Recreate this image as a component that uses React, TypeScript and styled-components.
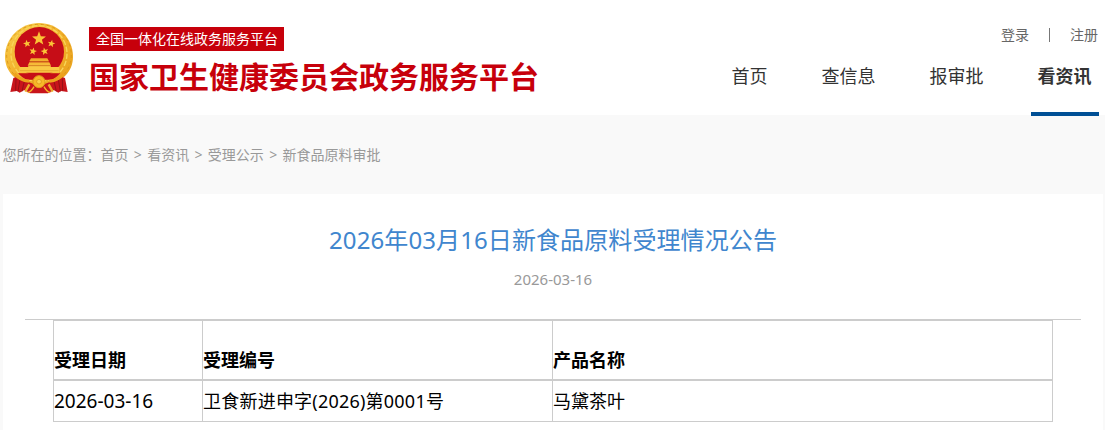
import * as React from "react";
import styled, { createGlobalStyle } from "styled-components";

const GlobalStyle = createGlobalStyle`
  * {
    box-sizing: border-box;
  }

  body {
    margin: 0;
    background: #f9f9f9;
    font-family: "Noto Sans", "Noto Sans CJK SC", sans-serif;
    overflow: hidden;
  }
`;

const navItems = ["首页", "查信息", "报审批", "看资讯"];
const crumbs = ["首页", "看资讯", "受理公示", "新食品原料审批"];
const columns = ["受理日期", "受理编号", "产品名称"];
const records = [["2026-03-16", "卫食新进申字(2026)第0001号", "马黛茶叶"]];

const star = (cx: number, cy: number, r: number, turn = 0) =>
  Array.from({ length: 10 }, (_, i) => {
    const a = ((i * 36 - 90 + turn) * Math.PI) / 180;
    const d = i % 2 ? r * 0.42 : r;
    return `${(cx + d * Math.cos(a)).toFixed(1)},${(cy + d * Math.sin(a)).toFixed(1)}`;
  }).join(" ");

const Emblem = () => (
  <EmblemSvg viewBox="12 35 210 219">
    <defs>
      <linearGradient id="gold" x1="0" y1="0" x2="1" y2="1">
        <stop offset="0" stopColor="#f8cf4e" />
        <stop offset="0.5" stopColor="#f2b02a" />
        <stop offset="1" stopColor="#e8a01c" />
      </linearGradient>
      <linearGradient id="gate" x1="0" y1="0" x2="0" y2="1">
        <stop offset="0" stopColor="#f2a828" />
        <stop offset="1" stopColor="#fbd04a" />
      </linearGradient>
    </defs>
    {/* wheat ring */}
    <path
      d="M117 38C61 38 15 82 15 139c0 22 8 42 24 58l37 33h82l37-33c16-16 24-36 24-58C219 82 173 38 117 38z"
      fill="url(#gold)"
    />
    <ellipse cx="117" cy="134" rx="97" ry="92" fill="none" stroke="#dc981c" strokeWidth="3" strokeDasharray="9 9" />
    <ellipse cx="117" cy="130" rx="84" ry="84" fill="none" stroke="#f9d55a" strokeWidth="4" strokeDasharray="16 6" />
    <circle cx="118" cy="124" r="74" fill="#c60d17" />
    {/* gate */}
    <path d="M93 144h49l5 9H88zM88 156h60l5 10H83zM86 167h65v13H86z" fill="url(#gate)" />
    <path d="M58 170h27v-4h67v4h26v17H58z" fill="#fac845" />
    <path d="M90 154h56M85 166h66" stroke="#c8781a" strokeWidth="2" />
    <path d="M60 181h116" stroke="#e09a24" strokeWidth="2" />
    <path d="M54 189h127c-8 9-16 15-26 19H80c-10-4-18-10-26-19z" fill="#c60d17" />
    {/* ribbons */}
    <path d="M40 203c13-6 25-2 36 8l25 10 16 6 17-6 25-10c11-10 23-14 36-8l8 42-20-3-8 5-14-8-17 10h-54l-17-10-14 8-8-5-20 3z" fill="#c8141b" />
    <path d="M48 205l-1 36M60 207l-6 36M73 213l-7 30M187 205l1 36M175 207l6 36M162 213l7 30" stroke="#961016" strokeWidth="3" fill="none" />
    <path d="M43 190c12 14 27 21 44 23M192 190c-12 14-27 21-44 23" stroke="#eda11c" strokeWidth="9" fill="none" />
    <path d="M88 222l-12 22M146 222l12 22" stroke="#eda92a" strokeWidth="7" fill="none" />
    <circle cx="117" cy="214" r="18" fill="#f7b728" stroke="#e09a1c" strokeWidth="3" />
    <circle cx="117" cy="214" r="7" fill="#fbd04a" stroke="#d98c18" strokeWidth="2" />
    <path d="M102 229c-5 10-11 16-19 18M132 229c5 10 11 16 19 18" stroke="#f6b52a" strokeWidth="4" fill="none" />
    <g fill="#fbc437">
      <polygon points={star(117, 85, 22)} />
      <polygon points={star(81, 100, 12, -12)} />
      <polygon points={star(154, 100, 12, 12)} />
      <polygon points={star(99, 123, 12, 12)} />
      <polygon points={star(134, 123, 12, -12)} />
    </g>
  </EmblemSvg>
);

const App = () => {
  return (
    <>
      <GlobalStyle />
      <Header>
        <Brand>
          <Emblem />
          <BrandText>
            <Badge>全国一体化在线政务服务平台</Badge>
            <BrandName>国家卫生健康委员会政务服务平台</BrandName>
          </BrandText>
        </Brand>
        <HeaderRight>
          <Account>
            <span>登录</span>
            <Divider />
            <span>注册</span>
          </Account>
          <Nav>
            {navItems.map((item) => (
              <NavItem key={item} $active={item === "看资讯"}>
                {item}
              </NavItem>
            ))}
          </Nav>
        </HeaderRight>
      </Header>
      <Breadcrumb>
        <span>您所在的位置：</span>
        {crumbs.map((crumb, i) => (
          <React.Fragment key={crumb}>
            {i > 0 && <Separator>&gt;</Separator>}
            <span>{crumb}</span>
          </React.Fragment>
        ))}
      </Breadcrumb>
      <Article>
        <Title>2026年03月16日新食品原料受理情况公告</Title>
        <PublishDate>2026-03-16</PublishDate>
        <Content>
          <Table>
            <Row $head>
              {columns.map((name) => (
                <Cell key={name}>{name}</Cell>
              ))}
            </Row>
            {records.map((record) => (
              <Row key={record[1]}>
                {record.map((value, i) => (
                  <Cell key={value} $date={i === 0} $code={i === 1}>
                    {value}
                  </Cell>
                ))}
              </Row>
            ))}
          </Table>
        </Content>
      </Article>
    </>
  );
};

const Header = styled.header`
  display: flex;
  justify-content: space-between;
  height: 115px;
  padding: 0 6px 0 4px;
  background: #fff;
`;

const Brand = styled.div`
  display: flex;
  align-items: flex-start;
`;

const EmblemSvg = styled.svg`
  width: 70px;
  height: 73px;
  margin-top: 22px;
`;

const BrandText = styled.div`
  display: flex;
  flex-direction: column;
  align-items: flex-start;
  padding: 27px 0 0 15px;
`;

const Badge = styled.span`
  width: 195px;
  height: 24px;
  padding-left: 7px;
  background: #c7000b;
  color: #fff;
  font-size: 14px;
  line-height: 24px;
  white-space: nowrap;
`;

const BrandName = styled.h1`
  margin: 4px 0 0;
  color: #c7000b;
  font-size: 30px;
  font-weight: 700;
  line-height: 44px;
  white-space: nowrap;
`;

const HeaderRight = styled.div`
  display: flex;
  flex-direction: column;
  align-items: flex-end;
`;

const Account = styled.div`
  display: flex;
  align-items: center;
  height: 48px;
  padding: 22px 1px 0 0;
  color: #666;
  font-size: 14px;
  line-height: 26px;
`;

const Divider = styled.i`
  width: 1px;
  height: 14px;
  margin: 0 20px;
  background: #777;
`;

const Nav = styled.nav`
  display: flex;
  gap: 40px;
`;

const NavItem = styled.a<{ $active: boolean }>`
  height: 68px;
  padding: 0 7.5px 0 6.5px;
  border-bottom: 4px solid ${({ $active }) => ($active ? "#004f95" : "transparent")};
  color: #333;
  font-size: 18px;
  font-weight: ${({ $active }) => ($active ? 700 : 400)};
  line-height: 57px;
`;

const Breadcrumb = styled.div`
  display: flex;
  height: 79px;
  padding-left: 2.5px;
  color: #999;
  font-size: 14px;
  line-height: 80px;
`;

const Separator = styled.span`
  width: 18.67px;
  text-align: center;
`;

const Article = styled.main`
  height: 236px;
  margin: 0 2px 0 3px;
  padding: 25px 22px 0;
  background: #fff;
`;

const Title = styled.h2`
  margin: 0;
  color: #4086ce;
  font-size: 24px;
  font-weight: 400;
  letter-spacing: 0.1px;
  line-height: 42px;
  text-align: center;
`;

const PublishDate = styled.p`
  height: 58px;
  margin: 0;
  color: #999;
  font-size: 15px;
  line-height: 37px;
  text-align: center;
`;

const Content = styled.section`
  border-top: 1px solid #ccc;
`;

const Table = styled.div`
  width: 1000px;
  margin-left: 28px;
`;

const Row = styled.div<{ $head?: boolean }>`
  display: grid;
  grid-template-columns: 149px 350px 499px;
  height: ${({ $head }) => ($head ? 60 : 42)}px;
  padding-top: ${({ $head }) => ($head ? 19 : 0)}px;
  border: 1px solid #ccc;
  background: linear-gradient(#ccc, #ccc) 148px 0 / 1px 100% no-repeat,
    linear-gradient(#ccc, #ccc) 498px 0 / 1px 100% no-repeat;
  color: #000;
  font-size: 18px;
  font-weight: ${({ $head }) => ($head ? 700 : 400)};
  line-height: 40px;
`;

const Cell = styled.div<{ $date?: boolean; $code?: boolean }>`
  white-space: nowrap;
  font-size: ${({ $date }) => ($date ? 19 : 18)}px;
  letter-spacing: ${({ $code }) => ($code ? "0.22px" : "normal")};
`;

export default App;
